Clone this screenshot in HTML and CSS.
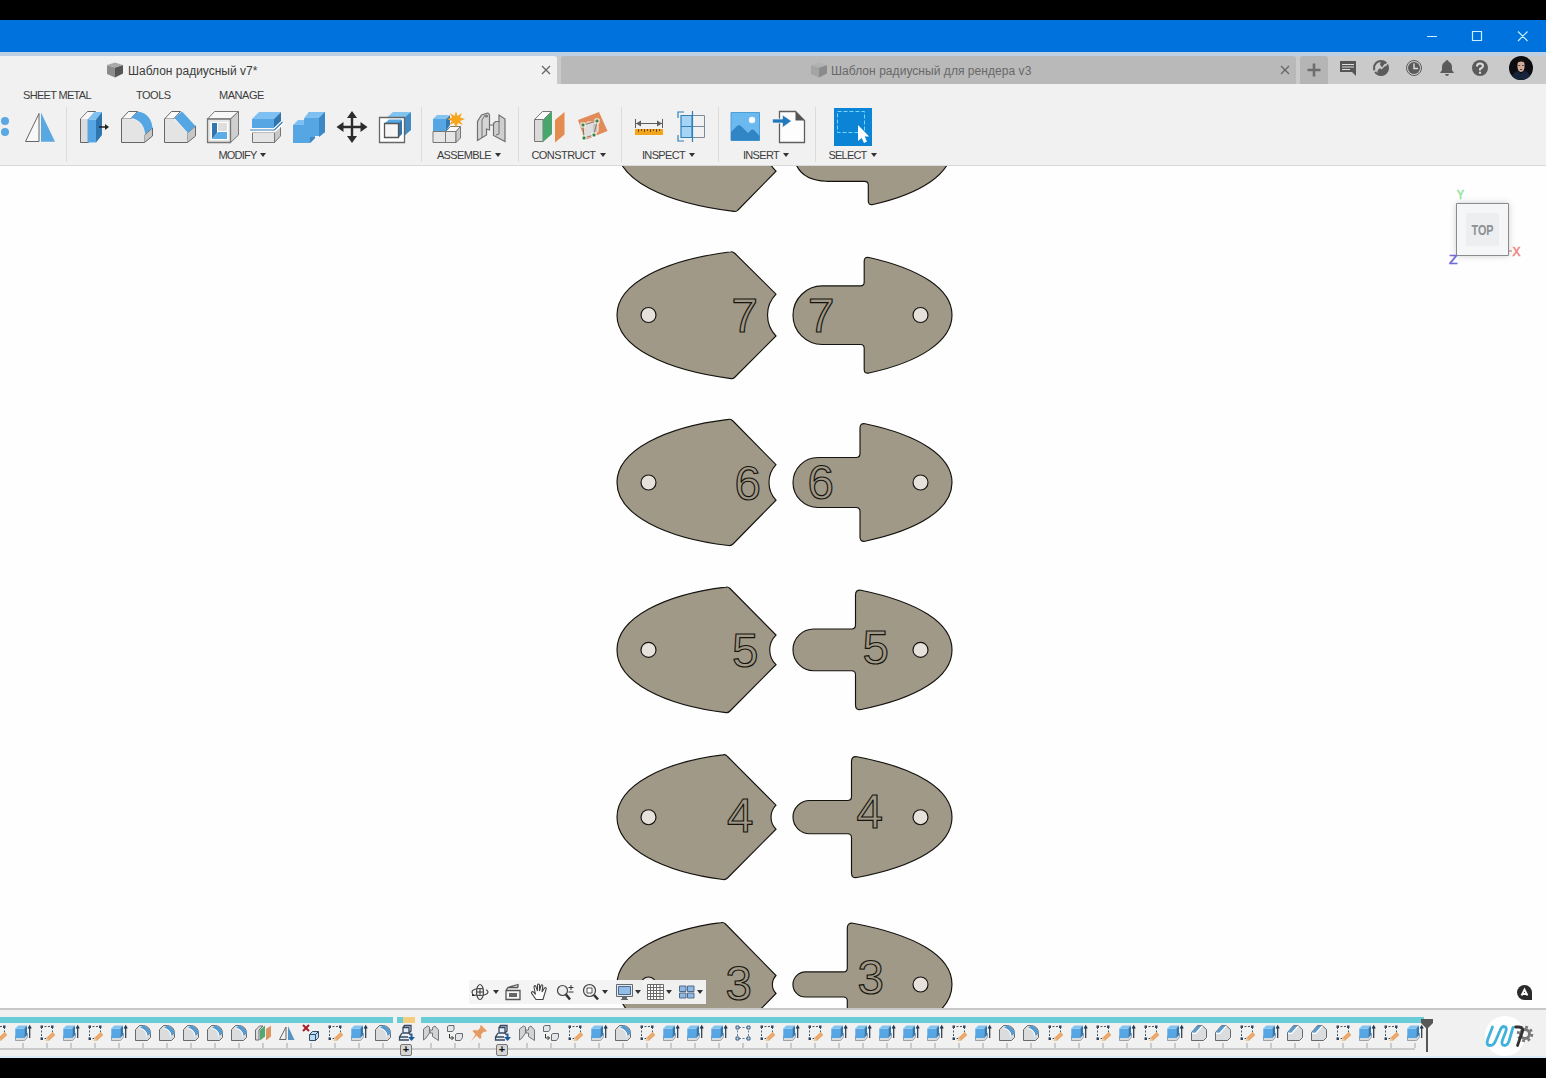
FILE: index.html
```html
<!DOCTYPE html>
<html lang="ru">
<head>
<meta charset="utf-8">
<title>Шаблон радиусный v7*</title>
<link rel="stylesheet" href="styles.css">
</head>
<body>
<svg class="defs" aria-hidden="true">
  <symbol id="cube" viewBox="0 0 16 16"><path fill="#8c8c8c" d="M0 3l8 2.500v10L0 12z"/><path fill="#555" d="M8 5.500L16 3v8.500l-8 4z"/><path fill="#aaa" d="M0 3l8-2.500L16 3 8 5.500z"/></symbol>
  <symbol id="sk" viewBox="0 0 18 18"><path fill="none" stroke="#4b5868" stroke-dasharray="2 1.500" d="M3.500 3v11M14.500 3v6M3 2.500h12M3 14.500h7"/><path fill="#34465c" d="M2.500 1.500H5V4H2.500zM13 1.500h2.500V4H13zM2.500 13.500H5V16H2.500z"/><path stroke="#eba86a" stroke-width="4" d="M9.500 15.500l6.500-6"/><path fill="#e9c99e" d="M7.500 17.500l1-4 3 3z"/></symbol>
  <symbol id="ex" viewBox="0 0 18 18"><path fill="#d9dde2" stroke="#7c858e" stroke-width=".7" d="M1.500 12h9l3-3v4l-3 3.500h-9z"/><path fill="#57a5e2" d="M1.300 4.500h9V14h-9z"/><path fill="#83c3f0" d="M1.300 4.500l3-3H13l-2.700 3z"/><path fill="#3079b4" d="M10.300 4.500L13 1.500V11l-2.700 3z"/><path fill="none" stroke="#243447" stroke-width="1.200" d="M15.700 14V3M14.200 4.500l1.500-2.500 1.500 2.500"/></symbol>
  <symbol id="fi" viewBox="0 0 18 18"><path fill="#dadcde" stroke="#686c70" d="M1.500 16.500v-11l4-4h4q7 1 7 8v4l-3 3z"/><path fill="#569bd0" d="M6 4l3-2.500q7 1.500 7.500 8L13.500 12Q13 5.500 6 4z"/><path fill="none" stroke="#fff" d="M5.500 4.500q7 .5 7.500 8"/></symbol>
  <symbol id="ch" viewBox="0 0 18 18"><path fill="#dadcde" stroke="#686c70" d="M1.500 16.500v-8l6-7h4.500l4.500 4v8l-3 3z"/><path fill="#569bd0" d="M1.800 8.500L7.500 1.700h4.300L5.300 9z"/><path fill="none" stroke="#fff" stroke-width="1.200" d="M2 9.300h3.700L12.300 2"/></symbol>
  <symbol id="pl" viewBox="0 0 18 18"><path fill="#dadcde" stroke="#6c6c6c" d="M1.500 16V6l4-4H9L5 6v10z"/><path fill="#51a870" d="M6 6l5-4.500v11L6 16.500z"/><path fill="#df9361" d="M12 5l5-3.500v11l-5 4z"/></symbol>
  <symbol id="mi" viewBox="0 0 18 18"><path fill="none" stroke="#666" d="M8 3v12.500H1.500z"/><path fill="#5595c4" d="M10 2v14h6.500z"/></symbol>
  <symbol id="rm" viewBox="0 0 18 18"><path stroke="#a91d25" stroke-width="2" d="M1 1l6 6M7 1L1 7"/><path fill="#bcdcf5" stroke="#334b63" d="M7.500 10.500h6v6h-6zM7.500 10.500l3-3h6v6l-3 3M13.500 10.500l3-3"/></symbol>
  <symbol id="in" viewBox="0 0 18 18"><path fill="#e8edf2" stroke="#344963" stroke-width="1.300" d="M5 9V3.500l1.500-2H13V7l-2 2zM5 3.500h6V9M4 9l-2.500 4v3H11M11 9l1.500 2M1.500 13H10"/><path fill="#1e5c99" d="M12.500 9.500h2V13H17l-3.500 4L10 13h2.500z"/></symbol>
  <symbol id="jo" viewBox="0 0 18 18"><path fill="#d2d3d4" stroke="#73777a" d="M1.500 16V5l4-3 2 1v6L4 14zM10.500 3.500L13 2l3.500 4v10.500l-6-4V9H8V6h2.500z"/></symbol>
  <symbol id="co" viewBox="0 0 18 18"><path fill="#e4e5e6" stroke="#666b70" d="M1.500 2.500l1.500-1h5v4l-1.500 2h-5zM9.500 10.500l1.500-1h5.500v4l-2 3h-5z"/><path fill="none" stroke="#333" d="M3.500 10v4h4M5.500 12l2 2-2 2"/></symbol>
  <symbol id="pi" viewBox="0 0 18 18"><path fill="#e59a62" d="M11 1l6 6-2 1-1-.5-3 3 .5 3-1.500 1.500-3.500-3.500L1 17l4.500-6.500L2.500 7 4 6l3.500.5 3-3L10 2z"/></symbol>
  <symbol id="pa" viewBox="0 0 18 18"><path fill="none" stroke="#657b91" stroke-dasharray="2 1.500" d="M3.500 3v12M14.500 3v12M5 3.500h8M5 14.500h8"/><path fill="#b7d4ec" stroke="#456382" d="M2 2h3v3H2zM13 2h3v3h-3zM2 13h3v3H2zM13 13h3v3h-3z"/></symbol>
</svg>

<header class="titlebar">
  <svg width="106" height="20" fill="none" stroke="#c9f1ff" stroke-width="1.200"><path d="M0 10.500h10M45.500 5.500h9v9h-9zM91 5.500l9.500 9.500M100.500 5.500L91 15"/></svg>
</header>

<nav class="tabs">
  <div class="tab tab-active"><svg class="cube"><use href="#cube"/></svg><span>Шаблон радиусный v7*</span><svg class="close" viewBox="0 0 10 10"><path d="M1 1l8 8M9 1L1 9"/></svg></div>
  <div class="tab tab-idle"><svg class="cube"><use href="#cube"/></svg><span>Шаблон радиусный для рендера v3</span><svg class="close" viewBox="0 0 10 10"><path d="M1 1l8 8M9 1L1 9"/></svg></div>
  <div class="tab-add"><svg width="14" height="14"><path stroke="#6d6d6d" stroke-width="2.600" d="M7 .5v13M.5 7h13"/></svg></div>
  <div class="actions">
    <svg viewBox="0 0 18 18"><path fill="#555" d="M1 2h16v15l-4-4H1z"/><path stroke="#ddd" d="M3 5.500h12M3 8h12M3 10.500h8"/></svg>
    <svg viewBox="0 0 18 18"><circle cx="9" cy="9" r="7" fill="none" stroke="#5b5b5b" stroke-width="2"/><path fill="#5b5b5b" d="M9 17q-4-2-3.500-5.500L8 9l1.500 1.500L14 6l2.500 3q-.5 6-7.500 8z"/><path fill="#5b5b5b" d="M9 2l5 1-4 5.500-2-3z"/><path stroke="#cacaca" stroke-width="1.400" d="M1 13l4-2M13 7l3-3.500"/></svg>
    <svg viewBox="0 0 18 18"><circle cx="9" cy="9" r="7.500" fill="none" stroke="#5b5b5b"/><circle cx="9" cy="9" r="6" fill="#5b5b5b"/><path fill="none" stroke="#ddd" stroke-width="1.400" d="M9 4.500v5h4"/></svg>
    <svg viewBox="0 0 18 18"><path fill="#5b5b5b" d="M9 1q1.500 0 1.500 1.500Q14 4 14 8v3l2 3H2l2-3V8q0-4 3.500-5.500Q7.500 1 9 1zM7 15h4q-.5 2-2 2t-2-2z"/></svg>
    <svg viewBox="0 0 18 18"><circle cx="9" cy="9" r="8" fill="#5b5b5b"/><path fill="none" stroke="#ddd" stroke-width="2" d="M6 7.500Q6 4.500 9 4.500T12 7Q12 8.500 9 10v1.500M9 12.700v2"/></svg>
  </div>
  <svg class="avatar" viewBox="0 0 24 24"><circle cx="12" cy="12" r="12" fill="#0b0c10"/><path fill="#16233b" d="M3 20q3-5 6-5l3 3 3-3q4 0 6 5-3 4-9 4t-9-4z"/><path fill="#d1aa9b" d="M8.500 7.500Q9 5 12 5t3.500 2.500v4Q15 15.500 12 16q-3-.5-3.500-4.500z"/><path fill="#17130f" d="M8 8q-.5-5 4-5t4 5l-1-2-3-.5-3 .8z"/><path stroke="#5b3e36" d="M9.500 9.500h1.700M13 9.500h1.700M11 13.500h2.200"/></svg>
</nav>

<section class="ribbon">
  <div class="menus"><span class="m1">SHEET METAL</span><span class="m2">TOOLS</span><span class="m3">MANAGE</span></div>
  <div class="groups">
    <div class="group g-create"><div class="icons">
      <svg viewBox="0 0 40 40"><g fill="#59a8e2"><circle cx="28" cy="14" r="4"/><circle cx="28" cy="25" r="4"/></g></svg>
      <svg viewBox="0 0 40 40"><path fill="#f8f8f8" stroke="#666" d="M19 6.500V34.500H5.500z"/><path fill="#59a8e2" d="M21 5.500v29.300h14z"/></svg>
    </div></div>
    <div class="group g-modify"><div class="icons">
      <svg viewBox="0 0 40 40"><path fill="#dcdcdc" stroke="#666" d="M6.500 35.500V12l7-7.500h8l-7 8v23z"/><path fill="#f8f8f8" d="M7 12l6.500-7H21l-7 7z"/><path fill="#56a6e4" d="M13.500 12.500H22v23h-8.500z"/><path fill="#7dc0f1" d="M13.500 12.500l7-7.500H28l-6 7.500z"/><path fill="#2f76ae" d="M22 12.500L28 5v23l-6 7.500z"/><path stroke="#222" stroke-width="1.500" d="M25 20h7"/><path fill="#222" d="M31 17l4 3-4 3z"/></svg>
      <svg viewBox="0 0 40 40"><path fill="#c7c7c7" stroke="#666" d="M27.500 28l8-7v8l-8 6.500z"/><path fill="#fafafa" stroke="#666" d="M4.500 12l7-7.500h9l-7 7.500z"/><path fill="#e4e4e4" d="M4.500 35.500V12h9q13 1 14 16v7.500z"/><path fill="none" stroke="#666" d="M4.500 12v23.500h23"/><path fill="#56a6e4" d="M14 11l7-6.500q13 2 14.500 16.500L28 27Q27 13.500 14 11z"/></svg>
      <svg viewBox="0 0 40 40"><path fill="#c7c7c7" stroke="#666" d="M27.500 26l8-7v10l-8 6.500z"/><path fill="#fafafa" stroke="#666" d="M4.500 12l7-7.500h9l-7 7.500z"/><path fill="#e4e4e4" d="M4.500 35.500V12h9l14 14v9.500z"/><path fill="none" stroke="#666" d="M4.500 12v23.500h23"/><path fill="#56a6e4" d="M14.500 11L22 4.500 35.500 19 28 26z"/></svg>
      <svg viewBox="0 0 40 40"><path fill="#f8f8f8" stroke="#777" d="M4.500 12l7-7.500h24l-8 7.500z"/><path fill="#cfcfcf" stroke="#777" d="M27.500 12l8-7.500V28l-8 7.500z"/><path fill="#e6e6e6" stroke="#777" stroke-width="1.300" d="M4.500 12h23v23.500h-23z"/><path fill="#fff" d="M7.500 15h18v18h-18z"/><path fill="#2f76ae" d="M9 16h5v10l-5 6z"/><path fill="#5cade7" d="M9 32l6-7h9v7z"/><path fill="#dedede" d="M15 16h9v8h-9z"/></svg>
      <svg viewBox="0 0 40 40"><path fill="#e4e4e4" stroke="#777" d="M6.500 25.500h22v10h-22z"/><path fill="#c8c8c8" stroke="#777" d="M28.500 25.500l6-6v9.500l-6 6.500z"/><path fill="#56a6e4" d="M6 12h22v9H6z"/><path fill="#7dc0f1" d="M6 12l7-7h22l-7 7z"/><path fill="#2f76ae" d="M28 12l7-7v9l-7 7z"/><path stroke="#fff" stroke-width="4" fill="none" d="M4 23.500h24l9-8"/><path stroke="#2f7cb8" stroke-width="1.200" fill="none" d="M4 23h24.500l8-8"/></svg>
      <svg viewBox="0 0 40 40"><path fill="#56a6e4" d="M4 18h11v-6l5-7h16v20l-5 4h-5v2l-5 5H4z"/><path fill="#7dc0f1" d="M4 18l5-5h6v5zM15 11l6-6h15l-6 6z"/><path fill="#3d88c4" d="M30 11l6-6v20l-6 5zM21 30h5v1l-5 5z"/></svg>
      <svg viewBox="0 0 40 40"><path stroke="#2c2c2c" stroke-width="2.400" d="M20 8v24M8 20h24"/><path fill="#2c2c2c" d="M20 4l5 7H15zM20 36l-5-7h10zM4.500 20l7-5v10zM35.500 20l-7 5V15z"/></svg>
      <svg viewBox="0 0 40 40"><path fill="#83c3f0" d="M10 12l8-7h18l-7 7z"/><path fill="#418cc5" d="M28 12l8-7v18l-8 7z"/><path fill="#fff" stroke="#666" stroke-width="1.300" d="M4.500 10.500h25v25h-25z"/><path fill="#56a6e4" d="M10 16l4-3.500h12.500V27L24 30z"/><path fill="#2f76ae" d="M24 16l3-3v14l-3 3z"/><path fill="#f5f5f5" stroke="#555" stroke-width="1.300" d="M9.500 16.500h14v14h-14z"/></svg>
    </div><div class="label l-mod">MODIFY<i></i></div></div>
    <div class="group g-assemble"><div class="icons">
      <svg viewBox="0 0 40 40"><path fill="#e6e6e6" stroke="#777" d="M4 24.500h12.500v11H4zM16.500 24.500H27v11H16.500z"/><path fill="#fafafa" stroke="#777" d="M16.500 24.500l5-5h10l-4 5z"/><path fill="#c9c9c9" stroke="#777" d="M27 24.500l4.500-5V31L27 35.500z"/><path fill="#56a6e4" d="M4 12h13v12H4z"/><path fill="#83c3f0" d="M4 12l4-4h12l-3 4z"/><path fill="#3079b4" d="M17 12l4-4v10l-4 6z"/><path fill="#f7a51c" d="M27 4l1.500 5L33 6l-2 4.500 5 1.500-5 2 3 4-5-2-2 5-2-5-5 2 3-4-5-2 5-1.500L21 6l4.500 3z"/></svg>
      <svg viewBox="0 0 40 40"><path fill="#d5d5d5" stroke="#707070" stroke-width="1.200" d="M5.500 33.500V14.500l4-6.500 6-2q2 0 2 3v14l-3-1v6z"/><path fill="none" stroke="#707070" d="M10 31V13l3-5"/><circle cx="14.500" cy="9" r="1.500" fill="#777"/><path fill="#cfcfcf" stroke="#707070" stroke-width="1.200" d="M21.500 28.500v-12l2-2h3.500V8l6 4v22.500z"/><path fill="none" stroke="#707070" d="M17 18h5M27 14v13l-3 1"/></svg>
    </div><div class="label l-asm">ASSEMBLE<i></i></div></div>
    <div class="group g-construct"><div class="icons">
      <svg viewBox="0 0 40 40"><path fill="#fafafa" stroke="#777" d="M5.500 12.500l8-8h9l-8 8z"/><path fill="#dadada" stroke="#777" d="M5.500 12.500H14v22H5.500z"/><path fill="#48a56b" d="M14 13l9-8.500V27l-9 8z"/><path fill="#e48b50" d="M26 13l9.500-8v22.500L26 35.500z"/></svg>
      <svg viewBox="0 0 40 40"><path fill="#e08b58" d="M6 13l21-8 8.500 19L13 33z"/><path fill="#dedede" stroke="#f3d5bf" stroke-width="1.500" d="M12 18l4-3h10v9l-4 4-11 4z"/><path fill="#c6c6c6" d="M21 18l4-3v9l-4 3z"/><path fill="none" stroke="#8a7460" d="M11 18l14-4-3 14-10 3z"/><g fill="#3f7f48" stroke="#fff"><path d="M9 16h4v4H9zM23 12h4v4h-4zM20 26h4v4h-4zM10 29h4v4h-4z"/></g></svg>
    </div><div class="label l-con">CONSTRUCT<i></i></div></div>
    <div class="group g-inspect"><div class="icons">
      <svg viewBox="0 0 40 40"><path fill="none" stroke="#5d5d5d" d="M6.500 12v9M33.500 12v9M7 16.500h26"/><path fill="#5d5d5d" d="M7 16.500l5-3v6zM33 16.500l-5-3v6z"/><path fill="#f2a41b" d="M6 22h28v6H6z"/><path stroke="#6c4b12" d="M9.500 22v3M12.500 22v2M15.500 22v3M18.500 22v2M21.500 22v3M24.500 22v2M27.500 22v3M30.500 22v2"/></svg>
      <svg viewBox="0 0 40 40"><path fill="#a6d4f5" d="M9 8.500h11v22H9z"/><path fill="none" stroke="#7b8b99" d="M20 8.500h12.500v22H20M20 19.500h12.500"/><path fill="none" stroke="#2f7fba" stroke-width="1.200" d="M9 8.500h11v22H9zM9 19.500h11M20.500 4v31M12 5H6v6M6 28v6h6"/></svg>
    </div><div class="label l-ins">INSPECT<i></i></div></div>
    <div class="group g-insert"><div class="icons">
      <svg viewBox="0 0 40 40"><path fill="#6bb9ef" stroke="#4b9ed8" d="M6 5.500h28.500v28H6z"/><circle cx="27" cy="13" r="3.200" fill="#f7fbff"/><path fill="#3185c4" d="M6 25l6-6q2-1.500 4 0l7 7 3-3q1.500-1 3 0l5.500 6v4.500H6z"/></svg>
      <svg viewBox="0 0 40 40"><path fill="#fdfdfd" stroke="#5f5f5f" stroke-width="1.300" d="M10.500 4.500h16l9 9v22h-25z"/><path fill="#555" d="M26.500 4.500v9h9z"/><path fill="#2078bd" stroke="#f1f1f1" stroke-width=".7" d="M3.500 12h10V8l9 6-9 6.500V16h-10z"/></svg>
    </div><div class="label l-int">INSERT<i></i></div></div>
    <div class="group g-select"><div class="icons">
      <svg viewBox="0 0 40 40"><path fill="#0b84d5" d="M1 1h38v38H1z"/><path fill="none" stroke="#77d7ff" stroke-dasharray="4 2" d="M4.500 4.500h27v21h-27z"/><path fill="#fff" d="M25 18v16l3.700-3 2.300 5 3-1.500-2.300-5h4.500z"/></svg>
    </div><div class="label l-sel">SELECT<i></i></div></div>
  </div>
</section>

<main class="canvas">
  <svg class="drawing" viewBox="0 166 1546 842">
    <g class="part">
      <path d="M617 147.600C617 115 665 92 734 84Q736 83.500 738 85.500L776 124A33 33 0 0 0 776 171.200L738 210Q736.500 212 734 211.400C665 203 617 180 617 147.600z"/>
      <path d="M826.500 114Q793 115 793 147.600T826.500 181.300H864.500Q868.300 181.300 868.300 185V201Q868.300 205.500 873 204.500C920 194 952 174 952 147.600S920 101 873 91Q868.300 90 868.300 94V110Q868.300 114 864.500 114z"/>

      <path d="M617 315C617 283 665 260 731 251.800Q733 251.500 735 253.500L776 294.200A30 30 0 0 0 776 336L735 377Q733 379 731 378.600C665 370 617 347 617 315z"/>
      <path d="M822.300 285.900A29.300 29.300 0 0 0 822.300 344.500H860.500Q864.200 344.500 864.200 348.500V369.500Q864.200 374 869 373C920 362 952 341 952 315S920 269 869 257.500Q864.200 256.500 864.200 261V282Q864.200 285.900 860.500 285.900z"/>
      <circle cx="648.500" cy="315" r="7.500"/><circle cx="920.500" cy="315" r="7.500"/>

      <path d="M617 482.500C617 450.500 665 427 728.500 419.400Q731 418.700 733 421L776 464.700A26 26 0 0 0 776 500.200L733 544Q731 546 728.500 545.500C665 538 617 514.500 617 482.500z"/>
      <path d="M818 457.500A25 25 0 0 0 818 507.500H856Q860 507.500 860 511.500V537Q860 542 865 541.200C919 530 952 509 952 482.500S919 435 865 423.700Q860 423 860 428V453.500Q860 457.500 856 457.500z"/>
      <circle cx="648.500" cy="482.500" r="7.500"/><circle cx="920.500" cy="482.500" r="7.500"/>

      <path d="M617 649.900C617 618 664 594.500 726 587.100Q728 586.500 730 588.500L776 635.100A20.600 20.600 0 0 0 776 664.700L730 711Q728 713 726 712.600C664 705 617 682 617 649.900z"/>
      <path d="M813.800 629A20.800 20.800 0 0 0 813.800 670.700H851.500Q855.500 670.700 855.500 674.700V705Q855.500 710.500 861 709.500C918 698 952 677 952 649.900S918 602 861 590.200Q855.500 589.500 855.500 595V625Q855.500 629 851.500 629z"/>
      <circle cx="648.500" cy="649.900" r="7.500"/><circle cx="920.500" cy="649.900" r="7.500"/>

      <path d="M617 817.200C617 785 664 762 723 754.900Q725.500 754 727.500 756.500L776 805.200A17 17 0 0 0 776 829.200L727.500 878Q725.500 880 723 879.500C664 872 617 849 617 817.200z"/>
      <path d="M809.600 800.500A16.600 16.600 0 0 0 809.600 833.700H847.500Q851.500 833.700 851.500 837.700V873Q851.500 878.500 857 877.500C917 866 952 845 952 817.200S917 768 857 756.700Q851.500 756 851.500 761.500V796.500Q851.500 800.500 847.500 800.500z"/>
      <circle cx="648.500" cy="817.200" r="7.500"/><circle cx="920.500" cy="817.200" r="7.500"/>

      <path d="M617 984.500C617 953 664 930 721 922.600Q723.500 922 725.500 924L776 975.500A13 13 0 0 0 776 993.500L725.500 1045Q664 1040 640 1022 617 1005 617 984.500z"/>
      <path d="M805.500 971.900A12.500 12.500 0 0 0 805.500 997H843.300Q847.300 997 847.300 1001V1045C916 1034 952 1013 952 984.500S916 935 853 923.300Q847.300 922.500 847.300 928V967.900Q847.300 971.900 843.300 971.900z"/>
      <circle cx="648.500" cy="984.500" r="7.500"/><circle cx="920.500" cy="984.500" r="7.500"/>
    </g>
    <g class="digit">
      <text x="731.500" y="332.300">7</text><text x="808" y="331.600">7</text>
      <text x="734.500" y="499.800">6</text><text x="807.500" y="499.300">6</text>
      <text x="732" y="666.500">5</text><text x="862.500" y="663.800">5</text>
      <text x="727" y="831.700">4</text><text x="856.500" y="828.300">4</text>
      <text x="725.500" y="1000">3</text><text x="857.500" y="994.300">3</text>
    </g>
  </svg>

  <svg class="viewcube" viewBox="0 0 90 90">
    <path class="cube-face" d="M16.500 18.500h52v52h-52z"/>
    <path fill="#eceef0" d="M26 28h33v33H26z"/>
    <path stroke="#cf9a9a" stroke-width="1.500" d="M69 66h3"/>
    <text class="cube-top" x="31.500" y="50" textLength="22" lengthAdjust="spacingAndGlyphs">TOP</text>
    <text class="axis" x="17" y="14" fill="#8fe39b" stroke="#8fe39b" textLength="7" lengthAdjust="spacingAndGlyphs">Y</text>
    <text class="axis" x="72.500" y="71" fill="#ef8383" stroke="#ef8383" textLength="8" lengthAdjust="spacingAndGlyphs">X</text>
    <text class="axis" x="9" y="78.500" fill="#6f6ad6" stroke="#6f6ad6" textLength="8.500" lengthAdjust="spacingAndGlyphs">Z</text>
  </svg>

  <div class="navbar">
    <svg width="22" viewBox="0 0 22 18"><g fill="none" stroke="#484848" stroke-width="1.200"><ellipse cx="11" cy="9" rx="3.500" ry="7.500"/><ellipse cx="11" cy="9" rx="8" ry="3.500" stroke-dasharray="14 3"/></g><path stroke="#333" d="M11 6v6M8 9h6"/><path fill="#333" d="M3 10l4 3H3z"/></svg><i></i>
    <svg class="n-look" width="18" viewBox="0 0 18 18"><path fill="none" stroke="#555" stroke-width="1.300" d="M2 7.500h14v9H2zM2 7.500l2-3h10M4 4.500l10-3v3"/><path fill="#666" d="M5 10h8v4H5z"/></svg>
    <svg class="n-hand" width="18" viewBox="0 0 18 18"><path fill="#fff" stroke="#444" stroke-width="1.100" d="M6 16.500L1.500 10q0-2 2-1l2 2.500L4 4q0-2 1.700-1L7.500 8V2q1-2 2 0v6l1.500-5.500q1.200-1.500 1.800.3L12 9l2.500-4q1.800-1 1.700.8L14 13l-1 3.500z"/></svg>
    <svg class="n-zoom" width="18" viewBox="0 0 18 18"><circle cx="6.500" cy="7.500" r="5" fill="#eee" stroke="#444" stroke-width="1.200"/><path stroke="#333" stroke-width="2.600" d="M10 11.500l4 5"/><path stroke="#333" d="M12.500 4.500h5M15 2v5M12.500 9h5"/></svg>
    <svg class="n-fit" width="18" viewBox="0 0 18 18"><circle cx="7.500" cy="7.500" r="6" fill="#eee" stroke="#444" stroke-width="1.200"/><path fill="#fff" stroke="#555" d="M5 5h5v5H5z"/><path stroke="#333" stroke-width="2.600" d="M12 12l4 4.500"/></svg><i></i>
    <svg class="n-disp" width="17" viewBox="0 0 17 18"><path fill="#e8e8e8" stroke="#606a73" d="M.5 1.500h16v12H.5zM5 16.500h7"/><path fill="#94bce8" stroke="#466b93" d="M2.500 3.500h12v8h-12z"/><path fill="#666" d="M6 14h5v2H6z"/></svg><i></i>
    <svg class="n-grid" width="17" viewBox="0 0 17 18"><path fill="#fff" stroke="#686868" d="M.5 1.500h16v15H.5zM3.500 1.500v15M6.500 1.500v15M9.500 1.500v15M13 1.500v15M.5 4.500h16M.5 7.500h16M.5 10.500h16M.5 13.500h16"/></svg><i></i>
    <svg class="n-view" width="17" viewBox="0 0 17 18"><path fill="#8fb9e5" stroke="#526a85" d="M1.500 3h6.500v5.500H1.500zM9.500 3H16v5.500H9.500zM1.500 10h6.500v5H1.500zM9.500 10H16v5H9.500z"/></svg><i></i>
  </div>
  <svg class="assist" viewBox="0 0 15 15"><path fill="#2b2b2b" d="M7.500 0A7.500 7.500 0 0 1 15 7.500V15H7.500a7.500 7.500 0 0 1 0-15z"/><path fill="none" stroke="#fff" stroke-width="1.800" d="M4.500 10.500l3-6 3 6M6 9h4"/></svg>
</main>

<footer class="timeline">
  <div class="ranges"><b class="r1"></b><b class="r2"></b><b class="r3"></b><b class="r4"></b></div>
  <div class="steps">
    <span><svg><use href="#sk"/></svg></span><span><svg><use href="#ex"/></svg></span><span><svg><use href="#sk"/></svg></span><span><svg><use href="#ex"/></svg></span><span><svg><use href="#sk"/></svg></span><span><svg><use href="#ex"/></svg></span>
    <span><svg><use href="#fi"/></svg></span><span><svg><use href="#fi"/></svg></span><span><svg><use href="#fi"/></svg></span><span><svg><use href="#fi"/></svg></span><span><svg><use href="#fi"/></svg></span><span><svg><use href="#pl"/></svg></span>
    <span><svg><use href="#mi"/></svg></span><span><svg><use href="#rm"/></svg></span><span><svg><use href="#sk"/></svg></span><span><svg><use href="#ex"/></svg></span><span><svg><use href="#fi"/></svg></span><span class="expand"><svg><use href="#in"/></svg></span>
    <span><svg><use href="#jo"/></svg></span><span><svg><use href="#co"/></svg></span><span><svg><use href="#pi"/></svg></span><span class="expand"><svg><use href="#in"/></svg></span><span><svg><use href="#jo"/></svg></span><span><svg><use href="#co"/></svg></span>
    <span><svg><use href="#sk"/></svg></span><span><svg><use href="#ex"/></svg></span><span><svg><use href="#fi"/></svg></span><span><svg><use href="#sk"/></svg></span><span><svg><use href="#ex"/></svg></span><span><svg><use href="#ex"/></svg></span>
    <span><svg><use href="#ex"/></svg></span><span><svg><use href="#pa"/></svg></span><span><svg><use href="#sk"/></svg></span><span><svg><use href="#ex"/></svg></span><span><svg><use href="#sk"/></svg></span><span><svg><use href="#ex"/></svg></span>
    <span><svg><use href="#ex"/></svg></span><span><svg><use href="#ex"/></svg></span><span><svg><use href="#ex"/></svg></span><span><svg><use href="#ex"/></svg></span><span><svg><use href="#sk"/></svg></span><span><svg><use href="#ex"/></svg></span>
    <span><svg><use href="#fi"/></svg></span><span><svg><use href="#fi"/></svg></span><span><svg><use href="#sk"/></svg></span><span><svg><use href="#ex"/></svg></span><span><svg><use href="#sk"/></svg></span><span><svg><use href="#ex"/></svg></span>
    <span><svg><use href="#sk"/></svg></span><span><svg><use href="#ex"/></svg></span><span><svg><use href="#ch"/></svg></span><span><svg><use href="#ch"/></svg></span><span><svg><use href="#sk"/></svg></span><span><svg><use href="#ex"/></svg></span>
    <span><svg><use href="#ch"/></svg></span><span><svg><use href="#ch"/></svg></span><span><svg><use href="#sk"/></svg></span><span><svg><use href="#ex"/></svg></span><span><svg><use href="#sk"/></svg></span><span><svg><use href="#ex"/></svg></span>
  </div>
  <svg class="marker" viewBox="0 0 12 33"><path fill="#575757" d="M0 0h12v4L7 9v24H5V9L0 4z"/></svg>
  <svg class="brand" viewBox="0 0 54 44"><circle cx="21" cy="22" r="20" fill="#fff"/><g fill="none" stroke="#777"><circle cx="41" cy="20" r="4.500" stroke-width="3"/><circle cx="41" cy="20" r="7" stroke-width="2.500" stroke-dasharray="2.750 2.750"/></g><g fill="none" stroke-linecap="round" stroke-linejoin="round" stroke-width="2.800"><path stroke="#41b2dc" d="M8.500 13L3.700 25.500C2.500 29 3 31.500 6 31.500c3 0 4.500-2 5.500-4.500l4.500-10.500c1.200-3 3-4.500 5-3.700 2 1 1.500 3 .7 5L18.500 26c-1.200 3-.5 5.500 2 5.500 2.300 0 3.500-1.500 4.500-4.500L29 13.500"/><path stroke="#333" d="M31.500 13h3.500c3.500 0 4.300 2 3.300 5L33.500 31.500"/></g></svg>
</footer>
</body>
</html>
```
FILE: styles.css
```css
* { box-sizing: border-box; }
body {
  margin: 0; width: 1546px; height: 1078px; overflow: hidden;
  display: flex; flex-direction: column;
  padding: 20px 0; background: #000; color: #3c3c3c;
  font: 12px "Liberation Sans", Arial, sans-serif;
}
svg { display: block; flex: none; }
.defs { position: absolute; width: 0; height: 0; }

.titlebar { flex: 0 0 32px; background: #0072de; display: flex; justify-content: flex-end; align-items: center; padding-right: 13px; }

.tabs { flex: 0 0 32px; display: flex; background: #cacaca; border-top: 4px solid #bdd0e3; }
.tab { display: flex; align-items: center; padding-right: 6px; }
.tab span { margin: 1px 0 0 5px; white-space: nowrap; }
.tab-active { width: 557px; padding-left: 107px; background: #f1f1f1; border-radius: 0 3px 0 0; }
.tab-idle { width: 735px; margin-left: 4px; padding-left: 250px; background: #b9b9b9; color: #686868; border-radius: 3px 3px 0 0; }
.tab-idle span { margin-left: 4px; letter-spacing: .05px; }
.cube { width: 16px; height: 16px; }
.tab-idle .cube { opacity: .45; }
.close { width: 10px; height: 10px; margin-left: auto; fill: none; stroke: #666; stroke-width: 1.3; }
.tab-add { width: 28px; margin-left: 4px; background: #b5b5b5; border-radius: 3px 3px 0 0; display: flex; align-items: center; justify-content: center; }
.actions { display: flex; gap: 15px; padding: 3px 0 0 11px; }
.actions svg { width: 18px; height: 18px; }
.avatar { width: 24px; height: 24px; margin-left: 20px; }

.ribbon { flex: 0 0 82px; background: #f1f1f1; border-bottom: 1px solid #d9d9d9; }
.menus { display: flex; height: 22px; align-items: center; padding-left: 23px; font-size: 11px; white-space: nowrap; }
.menus span { flex: none; }
.m1 { width: 113px; letter-spacing: -.68px; }
.m2 { width: 83px; letter-spacing: -.5px; }
.m3 { letter-spacing: -.45px; }
.groups { display: flex; height: 59px; padding-top: 1px; }
.group { flex: none; display: flex; flex-direction: column; align-items: center; border-right: 1px solid #dcdcdc; height: 55px; }
.icons { display: flex; gap: 3.14px; }
.icons svg { width: 40px; height: 40px; }
.g-create { width: 67px; align-items: flex-end; padding-right: 6px; }
.g-modify { width: 355px; }
.g-assemble { width: 97px; }
.g-construct { width: 103px; }
.g-inspect { width: 97px; }
.g-insert { width: 97px; }
.g-select { width: 74px; border: 0; }
.g-modify .icons, .g-assemble .icons, .g-construct .icons, .g-inspect .icons { padding-left: 1px; }
.label { display: flex; align-items: center; height: 17px; margin: 1px 0 0 -3px; font-size: 11px; white-space: nowrap; letter-spacing: -.65px; }
.label i, .navbar i { flex: none; border: 3px solid transparent; border-top: 4px solid #333; border-bottom: 0; }
.label i { margin-left: 4px; }
.l-mod { letter-spacing: -.8px; }
.l-con { letter-spacing: -.55px; }
.l-asm { margin-left: -2px; }
.l-int { margin-left: -2px; }
.l-sel { margin-left: -1px; letter-spacing: -.8px; }

.canvas { flex: 0 0 842px; position: relative; background: #fefefe; overflow: hidden; }
.drawing { width: 1546px; height: 842px; }
.part { fill: #a09988; stroke: #15130f; stroke-width: 1.15; }
.part circle { fill: #e6e1db; }
.digit { font: 47.5px "Liberation Sans", Arial, sans-serif; fill: none; stroke: #17140d; stroke-width: 1.15; }
.viewcube { position: absolute; left: 1440px; top: 19px; width: 90px; height: 90px; }
.cube-face { fill: #f5f6f7; stroke: #8b8b8b; filter: drop-shadow(0 0 3px #d0d0d0); }
.cube-top { font: bold 14px "Liberation Sans", Arial, sans-serif; fill: #8c9093; }
.axis { font: 12px "Liberation Sans", Arial, sans-serif; stroke-width: .5; }
.navbar { position: absolute; left: 469px; top: 814px; width: 237px; height: 24px; display: flex; align-items: center; background: rgba(244, 244, 244, .96); }
.navbar svg { height: 18px; }
.navbar i { margin-left: 2px; }
.n-look { margin-left: 5px; }
.n-hand { margin-left: 8px; }
.n-zoom { margin-left: 8px; }
.n-fit { margin-left: 8px; }
.navbar .n-disp { margin-left: 8px; }
.navbar .n-grid { margin-left: 6px; }
.navbar .n-view { margin-left: 6px; }
.assist { position: absolute; left: 1517px; top: 819px; width: 15px; height: 15px; }

.timeline { flex: 0 0 50px; position: relative; overflow: hidden; background: #f1f1f1; border-top: 2px solid #c9c7c7; border-bottom: 2px solid #dcebf8; padding-top: 7px; }
.ranges { display: flex; height: 6px; }
.ranges b { flex: none; background: #69cdd8; }
.ranges .r1 { width: 393px; }
.ranges .r2 { width: 6px; margin-left: 4px; }
.ranges .r3 { width: 12px; background: #f3ce7e; }
.ranges .r4 { width: 1003px; margin-left: 6px; }
.steps { display: flex; width: 1429px; height: 27px; margin-left: -14px; border-bottom: 2px solid #cbcbcb; }
.steps span { flex: none; width: 24px; height: 26px; padding: 1px 0 0 4px; position: relative; }
.steps svg { width: 18px; height: 18px; }
.steps span::after { content: ""; display: block; width: 2px; height: 5px; margin: 1px 0 0 8px; background: #cbcbcb; }
.steps .expand::after { content: "+"; position: absolute; left: 6px; top: 21px; width: 10px; height: 10px; margin: 0; border: 1px solid #777; border-radius: 2px; background: #d5d5d5; color: #111; font: bold 11px/8px "Liberation Sans", Arial, sans-serif; text-align: center; }
.marker { position: absolute; left: 1421px; top: 9px; width: 12px; height: 33px; }
.brand { position: absolute; left: 1484px; top: 4px; width: 54px; height: 44px; }
```
